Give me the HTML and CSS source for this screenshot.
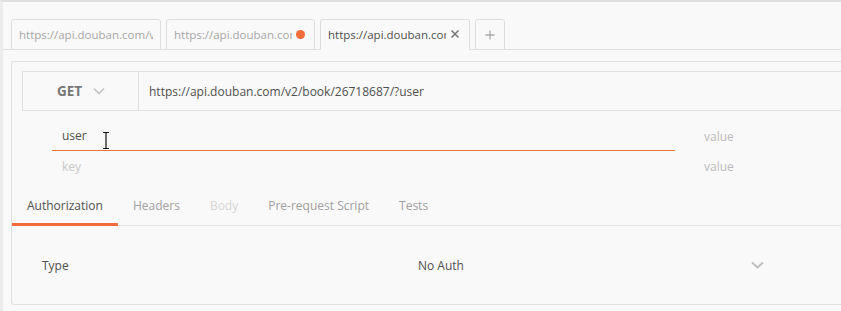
FILE: index.html
```html
<!DOCTYPE html>
<html>
<head>
<meta charset="utf-8">
<link rel="stylesheet" href="styles.css">
</head>
<body>
<div class="app">
  <div class="tabbar">
    <div class="tab"><span class="tab-title">https://api.douban.com/v2/book/26718687</span></div>
    <div class="tab second"><span class="tab-title">https://api.douban.com/v2/book</span><span class="dot"></span></div>
    <div class="tab active"><span class="tab-title">https://api.douban.com/v2/book</span>
      <svg class="close" width="10" height="10" viewBox="0 0 10 10"><path d="M1.5 1.5L8.5 8.5M8.5 1.5L1.5 8.5" stroke="#777" stroke-width="1.6" fill="none"/></svg>
    </div>
    <div class="tab plus">
      <svg width="10" height="10" viewBox="0 0 10 10"><path d="M5 0.5V9.5M0.5 5H9.5" stroke="#aaa" stroke-width="1.3" fill="none"/></svg>
    </div>
  </div>
  <div class="panel">
    <div class="reqbar">
      <div class="method"><span>GET</span>
        <svg width="12" height="8" viewBox="0 0 12 8"><path d="M1 1.5L6 6.5L11 1.5" stroke="#c4c4c4" stroke-width="1.6" fill="none"/></svg>
      </div>
      <div class="url">https://api.douban.com/v2/book/26718687/?user</div>
    </div>
    <div class="params">
      <div class="prow">
        <div class="pkey focused">user
          <svg class="ibeam" width="8" height="17" viewBox="0 0 8 17"><path d="M1 0.5H7M1 16.5H7M4 0.5V16.5" stroke="#111" stroke-width="1.2" fill="none"/></svg>
        </div>
        <div class="pval">value</div>
      </div>
      <div class="prow">
        <div class="pkey placeholder">key</div>
        <div class="pval">value</div>
      </div>
    </div>
    <div class="subtabs">
      <div class="subtab active">Authorization</div>
      <div class="subtab">Headers</div>
      <div class="subtab disabled">Body</div>
      <div class="subtab">Pre-request Script</div>
      <div class="subtab">Tests</div>
    </div>
    <div class="authrow">
      <div class="label">Type</div>
      <div class="select">No Auth
        <svg width="13" height="8" viewBox="0 0 13 8"><path d="M1 1.5L6.5 6.5L12 1.5" stroke="#bdbdbd" stroke-width="1.8" fill="none"/></svg>
      </div>
    </div>
  </div>
</div>
</body>
</html>
```
FILE: styles.css
```css
html, body {
  margin: 0;
  padding: 0;
  background: #f9f9f9;
  font-family: "Open Sans", "Noto Sans", sans-serif;
  font-size: 12px;
  color: #505050;
  overflow: hidden;
}
.app {
  height: 311px;
  border-top: 2px solid #e0e0e0;
  border-left: 3px solid #ececec;
  box-sizing: border-box;
}
.tabbar {
  display: flex;
  gap: 5px;
  padding: 17px 0 0 8px;
  border-bottom: 1px solid #dedede;
  height: 48px;
  box-sizing: border-box;
  align-items: flex-end;
}
.tab {
  position: relative;
  width: 150px;
  height: 31px;
  box-sizing: border-box;
  border: 1px solid #dedede;
  border-radius: 3px 3px 0 0;
  background: #f9f9f9;
  display: flex;
  align-items: center;
  padding: 0 7px 1px 7px;
  color: #a6a6a6;
  margin-bottom: -1px;
}
.tab-title {
  white-space: nowrap;
  overflow: hidden;
  flex: 1;
  font-size: 11.5px;
}
.tab.second {
  width: 149px;
}
.tab.second .tab-title {
  flex: 0 0 118px;
}
.dot {
  width: 9px;
  height: 9px;
  border-radius: 50%;
  background: #f26b3a;
  margin-left: 4px;
}
.tab.active {
  color: #505050;
  border-bottom-color: #f9f9f9;
}
.tab.active .tab-title {
  flex: 0 0 118px;
}
.close {
  margin-left: 4px;
}
.tab.plus {
  width: 30px;
  justify-content: center;
  padding: 0;
}
.panel {
  margin: 11px 0 0 8px;
  border: 1px solid #e0e0e0;
  border-right: none;
  border-radius: 3px 0 0 3px;
  height: 244px;
  box-sizing: border-box;
  padding: 9px 0 0 10px;
}
.reqbar {
  display: flex;
  height: 40px;
  border: 1px solid #e0e0e0;
  border-right: none;
  box-sizing: border-box;
}
.method {
  width: 116px;
  border-right: 1px solid #e0e0e0;
  display: flex;
  align-items: center;
  padding-left: 34px;
  box-sizing: border-box;
  gap: 11px;
  font-weight: bold;
  color: #777;
  font-size: 13.5px;
}
.url {
  display: flex;
  align-items: center;
  padding-left: 10px;
  color: #505050;
}
.params {
  padding: 11px 0 0 30px;
}
.prow {
  display: flex;
  height: 30px;
  align-items: center;
}
.pkey {
  position: relative;
  width: 623px;
  height: 29px;
  box-sizing: border-box;
  padding: 0 0 1px 10px;
  display: flex;
  align-items: center;
}
.pkey.focused {
  height: 28px;
  margin-bottom: 1px;
  border-bottom: 1px solid #e8733c;
  color: #505050;
}
.pkey.placeholder {
  color: #c8c8c8;
}
.ibeam {
  position: absolute;
  left: 50px;
  top: 9px;
}
.pval {
  margin-left: 29px;
  color: #bbb;
  padding-bottom: 1px;
}
.subtabs {
  display: flex;
  margin: 6px 0 0 -10px;
  border-bottom: 1px solid #e2e2e2;
  height: 38px;
  box-sizing: border-box;
}
.subtab {
  padding: 0 15px;
  display: flex;
  align-items: center;
  color: #a0a0a0;
  border-bottom: 3px solid transparent;
  margin-bottom: -1px;
}
.subtab.active {
  color: #505050;
  border-bottom-color: #f26b3a;
}
.subtab.disabled {
  color: #d6d6d6;
}
.authrow {
  display: flex;
  align-items: center;
  height: 78px;
  padding-left: 20px;
}
.label {
  width: 376px;
  color: #505050;
}
.select {
  display: flex;
  align-items: center;
  width: 346px;
  justify-content: space-between;
  color: #505050;
}
```
